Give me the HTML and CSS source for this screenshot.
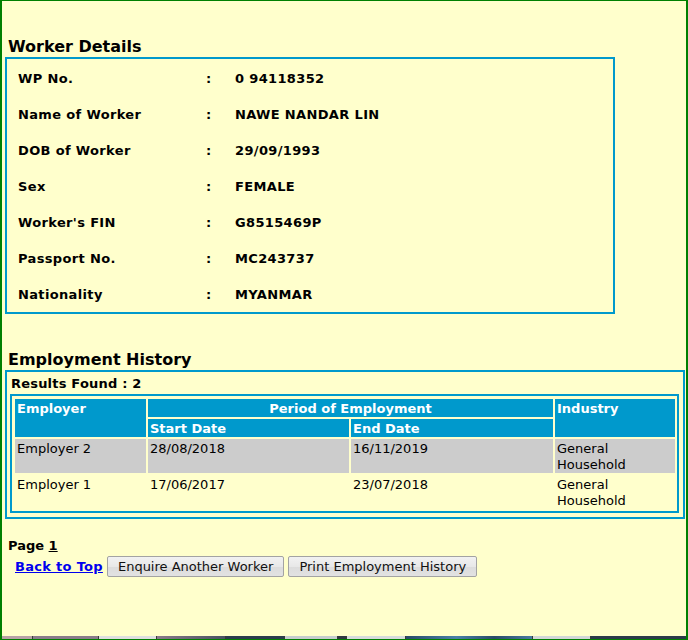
FILE: index.html
```html
<!DOCTYPE html>
<html>
<head>
<meta charset="utf-8">
<title>Worker Employment History</title>
<link rel="stylesheet" href="styles.css">
</head>
<body>
<div class="page">
  <div class="content">
    <h2 class="section-title">Worker Details</h2>
    <div class="worker-box">
      <div class="detail-row"><span class="label">WP No.</span><span class="colon">:</span><span class="value">0 94118352</span></div>
      <div class="detail-row"><span class="label">Name of Worker</span><span class="colon">:</span><span class="value">NAWE NANDAR LIN</span></div>
      <div class="detail-row"><span class="label">DOB of Worker</span><span class="colon">:</span><span class="value">29/09/1993</span></div>
      <div class="detail-row"><span class="label">Sex</span><span class="colon">:</span><span class="value">FEMALE</span></div>
      <div class="detail-row"><span class="label">Worker's FIN</span><span class="colon">:</span><span class="value">G8515469P</span></div>
      <div class="detail-row"><span class="label">Passport No.</span><span class="colon">:</span><span class="value">MC243737</span></div>
      <div class="detail-row"><span class="label">Nationality</span><span class="colon">:</span><span class="value">MYANMAR</span></div>
    </div>

    <h2 class="section-title emp-title">Employment History</h2>
    <div class="emp-box">
      <div class="results">Results Found : 2</div>
      <table class="history">
        <colgroup>
          <col class="col-emp">
          <col class="col-start">
          <col class="col-end">
          <col class="col-ind">
        </colgroup>
        <thead>
          <tr>
            <th rowspan="2">Employer</th>
            <th colspan="2" class="center">Period of Employment</th>
            <th rowspan="2">Industry</th>
          </tr>
          <tr>
            <th>Start Date</th>
            <th>End Date</th>
          </tr>
        </thead>
        <tbody>
          <tr class="alt">
            <td>Employer 2</td>
            <td>28/08/2018</td>
            <td>16/11/2019</td>
            <td>General Household</td>
          </tr>
          <tr>
            <td>Employer 1</td>
            <td>17/06/2017</td>
            <td>23/07/2018</td>
            <td>General Household</td>
          </tr>
        </tbody>
      </table>
    </div>

    <div class="pager">Page <a href="#" class="page-num">1</a></div>
    <div class="actions">
      <a href="#" class="top-link">Back to Top</a>
      <button type="button" class="btn">Enquire Another Worker</button>
      <button type="button" class="btn">Print Employment History</button>
    </div>
  </div>
  <div class="taskbar">
    <span class="seg s1"></span><span class="seg s2"></span><span class="seg s3"></span><span class="seg s4"></span><span class="seg s5"></span><span class="seg s6"></span><span class="seg s7"></span><span class="seg s8"></span><span class="seg s9"></span><span class="seg s10"></span><span class="seg s11"></span>
  </div>
</div>
</body>
</html>
```

FILE: styles.css
```css
html, body {
  margin: 0;
  padding: 0;
  background: #ffffcc;
}

body {
  font-family: "DejaVu Sans", Verdana, sans-serif;
  font-size: 13px;
  color: #000;
}

.page {
  box-sizing: border-box;
  height: 640px;
  border-top: 1px solid #008000;
  border-bottom: 1px solid #008000;
  border-left: 2px solid #008000;
  border-right: 2px solid #008000;
  display: flex;
  flex-direction: column;
}

.content {
  padding-left: 3px;
}

.section-title {
  margin: 35px 0 0;
  padding-left: 3px;
  font-size: 16px;
  line-height: 21px;
  font-weight: bold;
}

.emp-title {
  margin-top: 35px;
}

.worker-box {
  box-sizing: border-box;
  width: 610px;
  border: 2px solid #0099cc;
  padding: 1px 0 0 11px;
}

.detail-row {
  box-sizing: border-box;
  display: grid;
  grid-template-columns: 188px 29px 1fr;
  height: 36px;
  padding-top: 2px;
  align-items: center;
  font-weight: bold;
  line-height: 16px;
  letter-spacing: 0.35px;
}

.emp-box {
  box-sizing: border-box;
  width: 680px;
  border: 2px solid #0099cc;
  padding: 4px 4px 4px 3px;
}

.results {
  font-weight: bold;
  line-height: 16px;
  padding-left: 1px;
  letter-spacing: 0.2px;
}

.history {
  margin-top: 2px;
  width: 669px;
  table-layout: fixed;
  border: 2px solid #0099cc;
  border-collapse: separate;
  border-spacing: 2px;
  padding: 1px 0 0 1px;
  line-height: 16px;
  font-size: 13px;
}

.col-emp { width: 131px; }
.col-start { width: 201px; }
.col-end { width: 202px; }
.col-ind { width: 120px; }

.history th,
.history td {
  padding: 2px 2px 0;
  text-align: left;
  vertical-align: top;
}

.history th {
  background: #0099cc;
  color: #fff;
  font-weight: bold;
}

.history th.center {
  text-align: center;
}

.history td {
  height: 32px;
  box-sizing: content-box;
}

.history tr.alt td {
  background: #cccccc;
}

.pager {
  margin-top: 19px;
  padding-left: 3px;
  font-weight: bold;
  line-height: 16px;
}

.page-num {
  color: #000;
  text-decoration: underline;
}

.actions {
  margin-top: 2px;
  padding-left: 10px;
  display: flex;
  align-items: center;
  gap: 4px;
}

.top-link {
  color: #0000ee;
  font-weight: bold;
  text-decoration: underline;
  line-height: 16px;
  letter-spacing: 0.3px;
  margin-right: 0;
}

.btn {
  height: 21px;
  box-sizing: border-box;
  padding: 0 10px;
  font-family: "DejaVu Sans", Verdana, sans-serif;
  font-size: 13px;
  line-height: 19px;
  color: #111;
  background: linear-gradient(#f2f2f2, #e8e8e8 50%, #dcdcdc 51%, #e2e2e2);
  border: 1px solid #a3a3a3;
  border-radius: 2px;
}

.taskbar {
  margin-top: auto;
  height: 3px;
  display: flex;
}

.seg { display: block; height: 3px; border-right: 1px solid #3a3a3a; }
.s1 { width: 30px; background: #b8a2a6; }
.s2 { width: 65px; background: #8a7c8a; }
.s3 { width: 57px; background: #dedede; }
.s4 { width: 68px; background: linear-gradient(90deg, #8a7a8a, #4a5262); }
.s5 { width: 58px; background: #2c3c4c; }
.s6 { width: 52px; background: #c6cccc; }
.s7 { width: 8px; background: #303840; }
.s8 { width: 58px; background: #d6dada; }
.s9 { width: 126px; background: linear-gradient(90deg, #2a4a68, #4a80a8 40%, #2a4a68 70%, #4a7aa0); }
.s10 { width: 57px; background: #d2d6d6; }
.s11 { flex: 1; background: #2c3a48; border-right: 0; }
```
